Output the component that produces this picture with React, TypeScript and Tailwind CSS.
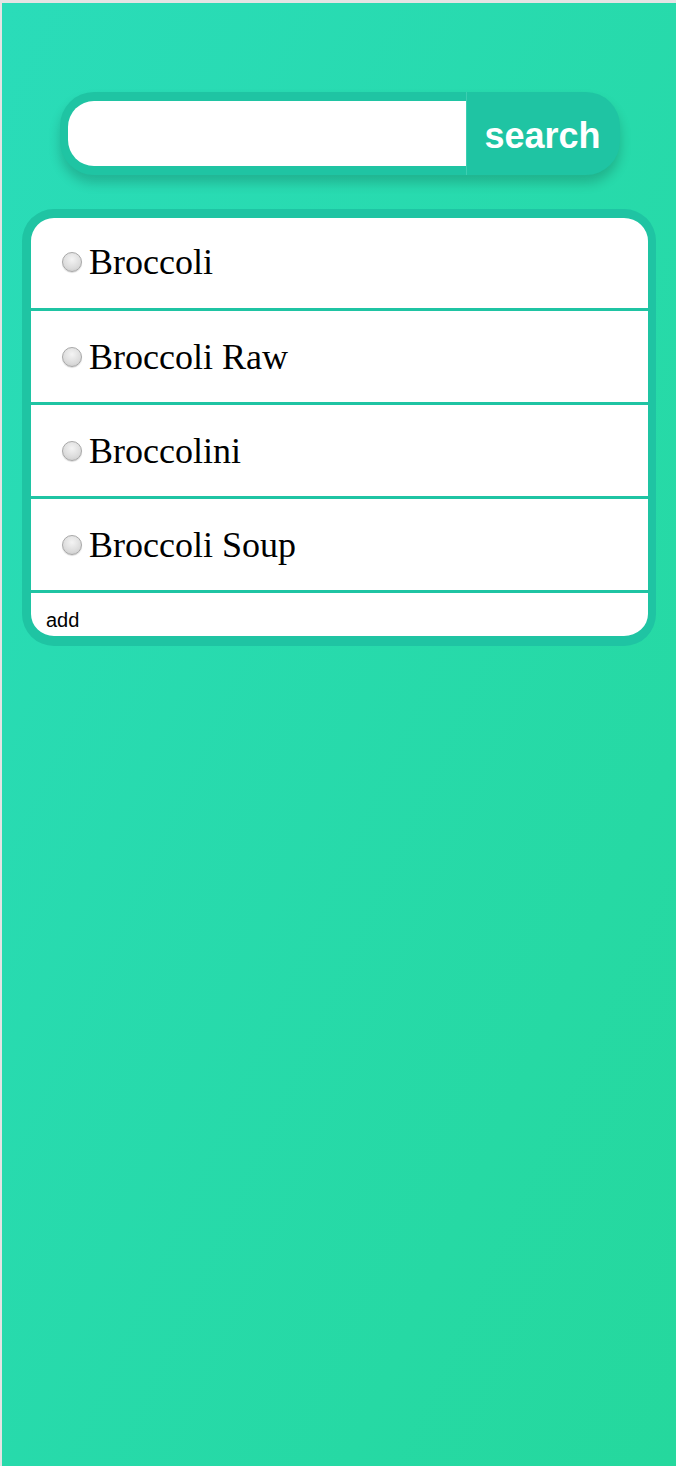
import React from "react";

const items = ["Broccoli", "Broccoli Raw", "Broccolini", "Broccoli Soup"];

const Radio = () => (
  <span className="w-5 h-5 shrink-0 rounded-full border border-[#a8a8a8] bg-[radial-gradient(circle_at_50%_35%,#f4f4f4_0%,#dcdcdc_60%,#c4c4c4_100%)] shadow-[0_1px_1px_rgba(0,0,0,0.15)]" />
);

const App = () => {
  return (
    <div className="w-[676px] h-[1466px] border-t-[3px] border-l-[2px] border-[#e4e4e4] bg-gradient-to-br from-[#2adcb9] to-[#25d89d] font-['Liberation_Sans',Arial,sans-serif]">
      {/* search bar */}
      <form className="ml-[58px] mt-[89px] w-[560px] h-[83px] flex rounded-[34px] bg-[#1fc4a3] shadow-[0_8px_12px_rgba(0,0,0,0.18)] overflow-hidden">
        <div className="pl-2 py-[9px] flex-1">
          <input
            type="text"
            className="w-full h-[65px] bg-white rounded-l-[26px] outline-none px-4 text-2xl"
          />
        </div>
        <button
          type="button"
          className="w-[154px] h-full border-l border-[#3ccfb2] flex items-center justify-center pt-1 pr-0.5 text-white font-bold text-[36px] leading-none"
        >
          search
        </button>
      </form>

      {/* results */}
      <div className="ml-5 mt-[34px] w-[634px] border-[9px] border-b-[10px] border-r-[8px] border-[#1fc4a3] rounded-[32px] bg-white overflow-hidden">
        {items.map((name, i) => (
          <div
            key={name}
            className={
              i === 0
                ? "h-[93px] pb-[2px] border-b-[3px] border-[#1fc4a3] flex items-center pl-[31px]"
                : "h-[94px] border-b-[3px] border-[#1fc4a3] flex items-center pl-[31px]"
            }
          >
            <Radio />
            <span className="ml-[7px] text-[36px] text-black font-['Liberation_Serif','Times_New_Roman',serif]">
              {name}
            </span>
          </div>
        ))}
        <div className="h-[43px] pl-[15px] pt-4 text-[20px] leading-[23px] text-black">
          add
        </div>
      </div>
    </div>
  );
};

export default App;
